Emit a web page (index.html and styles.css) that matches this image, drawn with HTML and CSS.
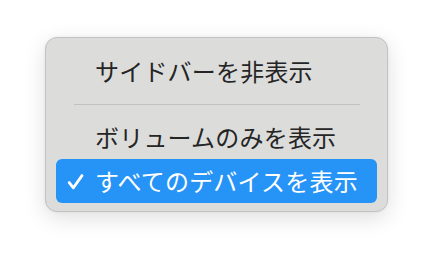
FILE: index.html
```html
<!DOCTYPE html>
<html lang="ja">
<head>
<meta charset="utf-8">
<link rel="stylesheet" href="styles.css">
</head>
<body>
<div class="menu">
  <div class="item"><span class="check"></span><span class="label">サイドバーを非表示</span></div>
  <div class="sep"></div>
  <div class="item"><span class="check"></span><span class="label">ボリュームのみを表示</span></div>
  <div class="item selected"><span class="check"><svg width="17" height="17" viewBox="0 0 17 17"><path d="M2.2 9.6 L6.4 14.8 L15 2.6" fill="none" stroke="#fff" stroke-width="2.8" stroke-linecap="round" stroke-linejoin="round"/></svg></span><span class="label">すべてのデバイスを表示</span></div>
</div>
</body>
</html>
```
FILE: styles.css
```css
html, body {
  margin: 0;
  padding: 0;
  background: #ffffff;
}
body {
  width: 434px;
  height: 266px;
  overflow: hidden;
  font-family: "Noto Sans CJK JP", "Noto Sans", sans-serif;
}
.menu {
  margin: 37px 0 0 45px;
  width: 343px;
  height: 175px;
  box-sizing: border-box;
  padding: 11px 10px 8px;
  background: #dcdcdb;
  border: 1px solid #c2c2c2;
  border-radius: 12px;
  box-shadow: 0 6px 22px rgba(0, 0, 0, 0.13), 0 0 3px rgba(0,0,0,0.06);
}
.item {
  height: 44px;
  display: flex;
  align-items: center;
  padding-left: 11px;
  border-radius: 6px;
  color: #252525;
  font-size: 24px;
  line-height: 1;
}
.check {
  width: 28px;
  display: flex;
  align-items: center;
}
.label {
  white-space: nowrap;
  letter-spacing: 0.2px;
}
.selected {
  background: #2693f6;
  color: #ffffff;
}
.sep {
  height: 22px;
  margin: 0 17px 0 18px;
  display: flex;
  align-items: center;
}
.sep::before {
  content: "";
  display: block;
  width: 100%;
  height: 1px;
  background: #c2c2c2;
}
```
